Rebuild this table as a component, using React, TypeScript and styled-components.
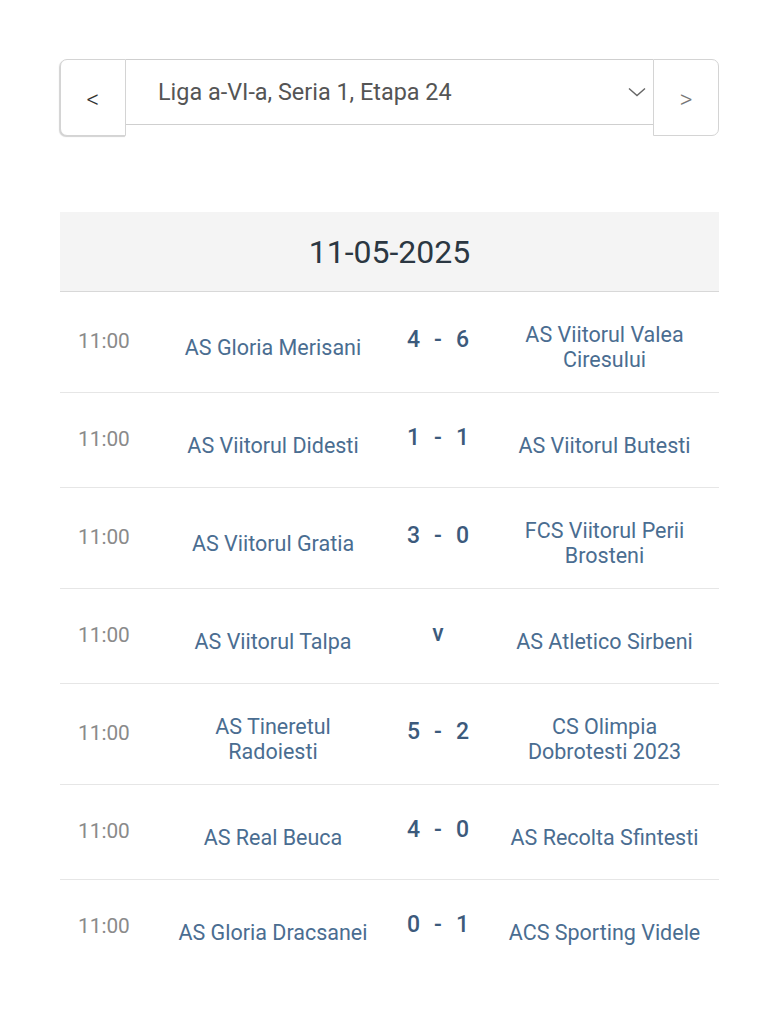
import React from "react";
import styled, { createGlobalStyle } from "styled-components";

const Global = createGlobalStyle`
  html, body { margin: 0; padding: 0; background: #fff; }
  body { font-family: Roboto, "Noto Sans", Arial, sans-serif; }
  * { box-sizing: border-box; }
`;

const Page = styled.div`
  padding: 59px 60px 40px 60px;
`;

const Nav = styled.div`
  display: flex;
  align-items: flex-start;
  height: 77px;
`;

const NavButton = styled.button<{ $side: "left" | "right" }>`
  width: 66px;
  height: 77px;
  flex: none;
  background: #fff;
  border: 1px solid #d4d4d4;
  font-family: Roboto, Arial, sans-serif;
  font-size: 25px;
  font-weight: 300;
  padding: 4px 0 0 0;
  display: flex;
  align-items: center;
  justify-content: center;
  border-radius: ${(p) => (p.$side === "left" ? "7px 0 0 7px" : "0 7px 7px 0")};
  box-shadow: ${(p) => (p.$side === "left" ? "-1px 1px 1px rgba(0,0,0,0.18)" : "none")};
  color: ${(p) => (p.$side === "left" ? "#333" : "#777")};
`;

const Select = styled.div`
  flex: 1;
  height: 66px;
  border: 1px solid #cfcfcf;
  border-left: none;
  border-right: none;
  display: flex;
  align-items: center;
  justify-content: space-between;
  padding: 0 6px 0 32px;
  font-size: 23.4px;
  font-weight: 400;
  color: #555;
`;

const Chevron = styled.svg`
  width: 20px;
  height: 20px;
`;

const DateHeader = styled.div`
  margin-top: 76px;
  background: #f4f4f4;
  border-bottom: 1px solid #d8d8d8;
  height: 80px;
  display: flex;
  align-items: center;
  justify-content: center;
  font-size: 32px;
  color: #2b3742;
  padding-top: 1px;
`;

const Row = styled.div<{ $last?: boolean }>`
  display: grid;
  grid-template-columns: 100px 226px 104px 229px;
  align-items: center;
  min-height: 95px;
  border-bottom: 1px solid ${(p) => (p.$last ? "transparent" : "#e6e6e6")};
`;

const Time = styled.div`
  padding: 0 0 3px 18px;
  font-size: 20.8px;
  font-weight: 400;
  color: #8a8a8a;
`;

const Team = styled.div`
  padding: 30px 4px 20px;
  text-align: center;
  font-size: 21.5px;
  font-weight: 400;
  line-height: 25px;
  color: #4a6d91;
  white-space: pre-line;
`;

const Score = styled.div`
  display: flex;
  justify-content: center;
  gap: 14px;
  padding-bottom: 5px;
  font-size: 23px;
  font-weight: 500;
  color: #3c5a7c;
`;

type Match = { home: string; away: string; score?: [number, number] };

const matches: Match[] = [
  { home: "AS Gloria Merisani", away: "AS Viitorul Valea\nCiresului", score: [4, 6] },
  { home: "AS Viitorul Didesti", away: "AS Viitorul Butesti", score: [1, 1] },
  { home: "AS Viitorul Gratia", away: "FCS Viitorul Perii\nBrosteni", score: [3, 0] },
  { home: "AS Viitorul Talpa", away: "AS Atletico Sirbeni" },
  { home: "AS Tineretul\nRadoiesti", away: "CS Olimpia\nDobrotesti 2023", score: [5, 2] },
  { home: "AS Real Beuca", away: "AS Recolta Sfintesti", score: [4, 0] },
  { home: "AS Gloria Dracsanei", away: "ACS Sporting Videle", score: [0, 1] },
];

export default function App() {
  return (
    <Page>
      <Global />
      <Nav>
        <NavButton $side="left">&lt;</NavButton>
        <Select>
          <span>Liga a-VI-a, Seria 1, Etapa 24</span>
          <Chevron viewBox="0 0 20 20" fill="none" stroke="#666" strokeWidth="1.4">
            <path d="M2 6.5 L10 13.5 L18 6.5" />
          </Chevron>
        </Select>
        <NavButton $side="right">&gt;</NavButton>
      </Nav>
      <DateHeader>11-05-2025</DateHeader>
      {matches.map((m, i) => (
        <Row key={i} $last={i === matches.length - 1}>
          <Time>11:00</Time>
          <Team>{m.home}</Team>
          <Score>
            {m.score ? (
              <>
                <span>{m.score[0]}</span>
                <span>-</span>
                <span>{m.score[1]}</span>
              </>
            ) : (
              <span>v</span>
            )}
          </Score>
          <Team>{m.away}</Team>
        </Row>
      ))}
    </Page>
  );
}
